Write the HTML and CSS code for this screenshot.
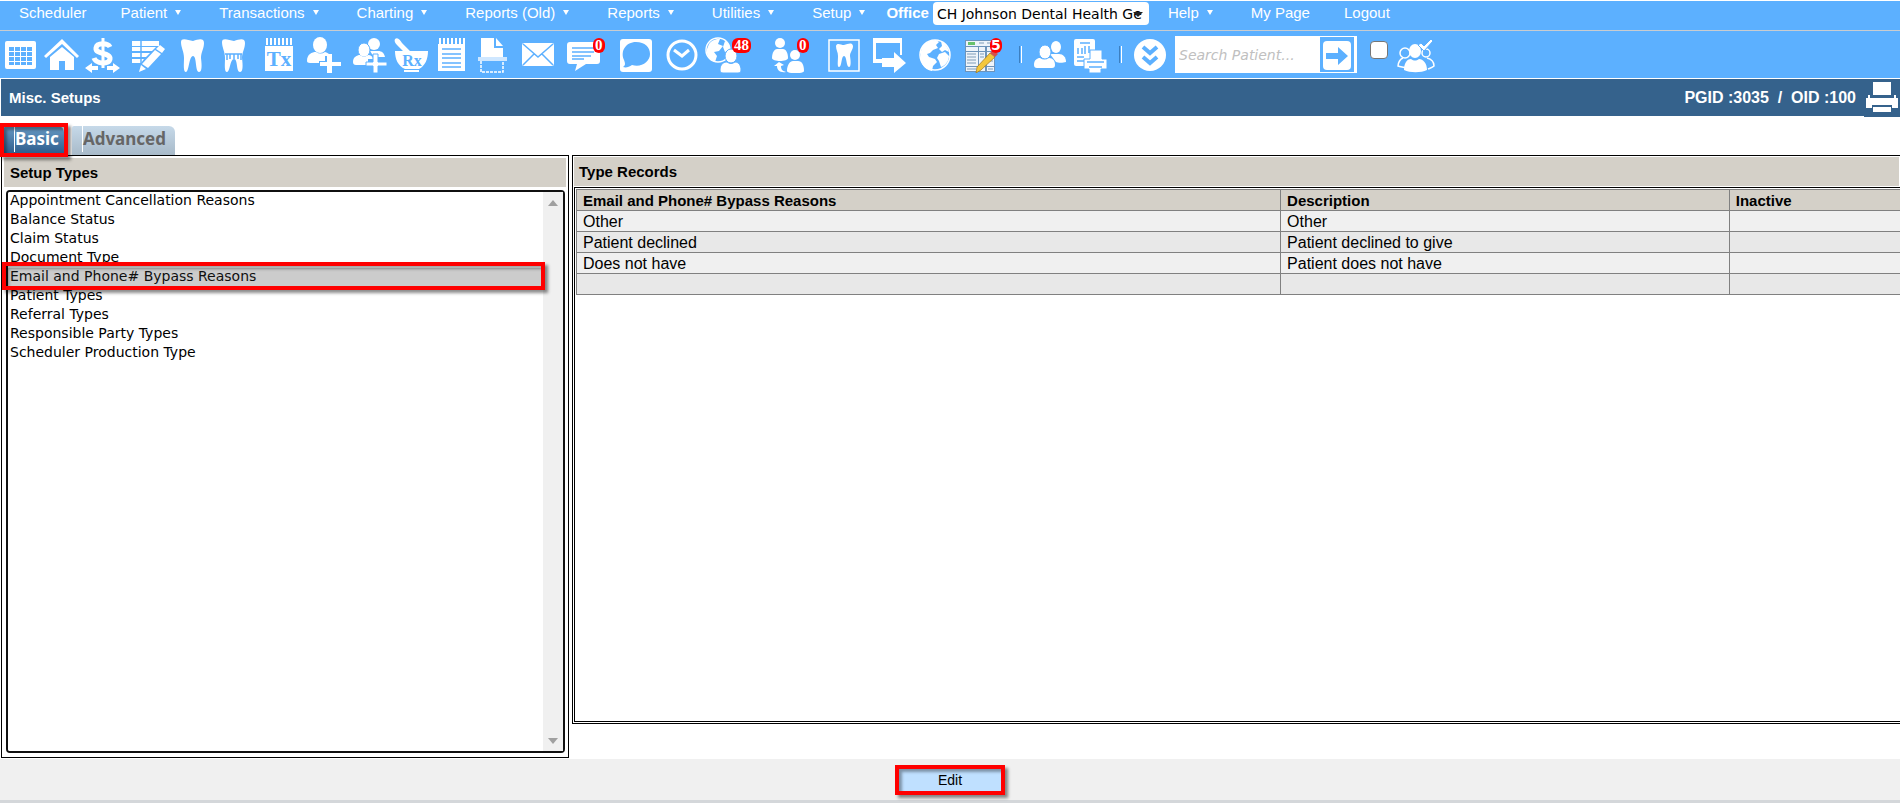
FILE: index.html
```html
<!DOCTYPE html>
<html lang="en">
<head>
<meta charset="utf-8">
<title>Misc. Setups</title>
<link rel="stylesheet" href="styles.css">
</head>
<body>
<nav class="menu" aria-label="Main">
  <a class="menu-item" href="#">Scheduler</a>
  <a class="menu-item has-sub" href="#">Patient</a>
  <a class="menu-item has-sub" href="#">Transactions</a>
  <a class="menu-item has-sub" href="#">Charting</a>
  <a class="menu-item has-sub" href="#">Reports (Old)</a>
  <a class="menu-item has-sub" href="#">Reports</a>
  <a class="menu-item has-sub" href="#">Utilities</a>
  <a class="menu-item has-sub" href="#">Setup</a>
  <label class="office-label" for="office">Office</label>
  <span class="office">
    <select id="office" class="office-select"><option>CH Johnson Dental Health Ge</option></select>
  </span>
  <a class="menu-item has-sub" href="#">Help</a>
  <a class="menu-item" href="#">My Page</a>
  <a class="menu-item" href="#">Logout</a>
</nav>

<div class="toolbar" role="toolbar" aria-label="Tools">
  <button class="tool tight" aria-label="Calendar"><svg viewBox="0 0 36 36"><rect x="2" y="4" width="31" height="28" rx="2"/><path class="cut" d="M6 10h5v4H6zM12 10h5v4h-5zM18 10h5v4h-5zM24 10h5v4h-5zM6 15h5v4H6zM12 15h5v4h-5zM18 15h5v4h-5zM24 15h5v4h-5zM6 20h5v4H6zM12 20h5v4h-5zM18 20h5v4h-5zM24 20h5v4h-5zM6 25h5v3H6zM12 25h5v3h-5zM18 25h5v3h-5zM24 25h5v3h-5z"/></svg></button>
  <button class="tool tight" aria-label="Home"><svg viewBox="0 0 36 36"><path d="M18 2 0 19l2 2L18 7l15 14 2-2zM6 20 18 10l12 10v13h-9v-9h-6v9H6z"/></svg></button>
  <button class="tool" aria-label="Transactions"><svg viewBox="0 0 36 36"><path class="line w5" d="M25 10c-2-4-13-5-14 1-1 7 15 4 14 11-1 6-14 5-16-1"/><path class="line w3" d="M18 1v30"/><path d="m0 31 7-5v3h6v4H7v3zM35 31l-7-5v3h-6v4h6v3z"/></svg></button>
  <button class="tool" aria-label="Edit ledger"><svg viewBox="0 0 36 36"><path d="M2 4h27v5H2zM2 10h24l-4 4H2zM2 16h18l-4 4H2zM2 22h12l-3 4H2zM30 8l5 4-3 4-6-4zM25 13l6 4-13 14-6-4zM11 28l5 4-7 3z"/><path class="cutline" d="M11 4v22"/></svg></button>
  <button class="tool tight" aria-label="Tooth chart"><svg viewBox="0 0 36 36"><path d="M6 5C6 0 13 3 18 4c6-2 11-3 11 2 0 6-3 9-3 15 1 8 1 14-2 14-4 0-2-16-6-16s-4 16-7 16c-3 0-2-8-2-14C9 14 6 11 6 5z"/></svg></button>
  <button class="tool" aria-label="Perio chart"><svg viewBox="0 0 36 36"><path d="M6 5C6 0 13 3 18 4c6-2 11-3 11 2 0 6-3 9-3 15 1 8 1 14-2 14-4 0-2-13-6-13s-4 13-7 13c-3 0-2-8-2-14C9 14 6 11 6 5z"/><path class="cutline" d="M9 17h17M11 17v6M14 17v5M18 17v5M22 17v5M25 17v6"/></svg></button>
  <button class="tool" aria-label="Treatment plan"><svg viewBox="0 0 36 36"><path d="M4 9h28v25H4z"/><path class="line w2" d="M6 1v7M10 1v7M14 1v7M18 1v7M22 1v7M26 1v7M30 1v7"/><text class="ink" x="18" y="29" font-size="21">Tx</text></svg></button>
  <button class="tool loose" aria-label="Add patient"><svg viewBox="0 0 36 36"><ellipse cx="14" cy="8" rx="7" ry="8"/><path d="M1 24c0-7 5-9 9-9 3 2 6 2 9 0 3 1 5 2 5 4h-5v5h-6v2H4c-2 0-3-1-3-2z"/><path d="M21 17h5v8h9v4h-9v7h-5v-7h-7v-4h7z"/></svg></button>
  <button class="tool tight" aria-label="Add family"><svg viewBox="0 0 36 36"><ellipse cx="22" cy="7" rx="6" ry="6"/><path d="M18 14h8c4 0 6 2 7 6H22z"/><ellipse class="cutfill" cx="12" cy="13" rx="6" ry="7"/><path d="M1 25c0-5 4-7 7-7 3 2 5 2 8 0 3 0 5 2 5 4h-5v6H4c-2 0-3-1-3-3z"/><path class="cutfill" d="M21 17h5v8h9v4h-9v7h-5v-7h-7v-4h7z"/></svg></button>
  <button class="tool tight" aria-label="Prescriptions"><svg viewBox="0 0 36 36"><path d="M2 2c3-2 5 1 7 4l9 9h-7L4 8C2 6 1 4 2 2zM2 14h33c0 8-3 15-9 18H12C5 29 2 22 2 14zM11 33h15v2H11z"/><text class="ink" x="19" y="29" font-size="16">Rx</text></svg></button>
  <button class="tool tight" aria-label="Notes"><svg viewBox="0 0 36 36"><path d="M4 7h27v27H4z"/><path class="line w2" d="M6 1v6M10 1v6M14 1v6M18 1v6M22 1v6M26 1v6M30 1v6"/><path class="cutline" d="M8 12h19M8 17h19M8 21h19M8 26h19M8 30h19"/></svg></button>
  <button class="tool" aria-label="Scan"><svg viewBox="0 0 36 36"><path d="M6 1h13v10h9v9H6z"/><path d="m21 1 7 8h-7z"/><path class="soft" d="M3 20h29v4H3z"/><path class="line" stroke-dasharray="3 1" d="M6 24v11h22V24"/></svg></button>
  <button class="tool loose" aria-label="Mail"><svg viewBox="0 0 36 36"><rect x="2" y="6" width="32" height="23" rx="2"/><path class="cutline" d="m3 7 15 13L33 7M3 28l11-11M33 28 22 17"/></svg></button>
  <button class="tool wide" aria-label="Messages, 0"><svg viewBox="0 0 36 36"><path d="M4 5h27c2 0 3 1 3 3v16c0 2-1 3-3 3H20L9 34l2-7H4c-2 0-3-1-3-3V8c0-2 1-3 3-3z"/><path class="cutline" d="M6 11h22M6 15h22M6 19h19M6 22h12"/></svg><span class="badge">0</span></button>
  <button class="tool loose" aria-label="Chat"><svg viewBox="0 0 36 36"><rect x="2" y="2" width="32" height="33" rx="3"/><path class="cut" d="M18 5c9 0 14 5 14 12 0 8-9 14-18 11-3 2-6 3-9 2 3-2 2-4 1-7C2 14 8 5 18 5z"/></svg></button>
  <button class="tool tight" aria-label="Time clock"><svg viewBox="0 0 36 36"><circle class="line w3" cx="18" cy="18" r="14"/><path class="line w3" d="m10 13 8 6 7-6"/></svg></button>
  <button class="tool badged" aria-label="Online requests, 48"><svg viewBox="0 0 36 36"><circle class="line" cx="13" cy="13" r="12"/><path d="M4 7c4-5 8-5 11-5l-2 5 5 2-4 5-5 1 3 4-2 6C5 23 1 19 2 12zM20 4c4 2 5 6 5 9l-5 2-2-5z"/><ellipse class="cutfill" cx="26" cy="19" rx="6" ry="7"/><path class="cutfill" d="M15 33c0-6 4-8 7-8 3 2 5 2 8 0 4 0 6 4 6 8 0 2-1 3-3 3H18c-2 0-3-1-3-3z"/></svg><span class="badge">48</span></button>
  <button class="tool wider" aria-label="Referrals, 0"><svg viewBox="0 0 36 36"><circle cx="10" cy="6" r="5"/><path d="M2 21c0-6 3-9 5-9h6c3 0 5 4 5 9 0 4-16 4-16 0z"/><circle cx="25" cy="18" r="5"/><path d="M17 34c0-6 3-10 6-10h5c4 0 6 4 6 10 0 3-17 3-17 0zM9 25l5 3-3 1c0 4 2 5 5 6-6 1-9-2-9-6H4z"/></svg><span class="badge">0</span></button>
  <button class="tool loose" aria-label="Tooth imaging"><svg viewBox="0 0 36 36"><rect class="line" x="3" y="3" width="30" height="31"/><path d="M10 9c1-4 5-1 8-1 4-1 8-3 9 1 0 4-3 6-3 10 1 6 1 11-1 11-3 0-2-11-5-11s-2 11-5 11c-2 0-1-6-1-11 0-4-2-6-2-10z"/></svg></button>
  <button class="tool" aria-label="Send window"><svg viewBox="0 0 36 36"><path fill-rule="evenodd" d="M1 1h29v17h-2V6H4v16h6v4H1z"/><path d="M10 21h12v-6l12 11-12 10v-6H10z"/></svg></button>
  <button class="tool loose" aria-label="Web"><svg viewBox="0 0 36 36"><circle class="line" cx="18" cy="18" r="15"/><path d="M4 14C6 6 13 3 19 3l3 2-3 3 2 3-5 2-3 3-3 1 2 3 6 2 2 3-4 4-1 5C7 33 2 25 4 16zM24 4c5 3 7 7 8 11l-4-2-3 2-3-3 3-3zM22 17l6-2 4 4c0 5-4 10-8 11l-2-6-2-3z"/></svg></button>
  <button class="tool wider" aria-label="Worklist, 5"><svg viewBox="0 0 36 36"><path fill="#6d94bb" d="M2 3h30v32H2z"/><path fill="#eef4fa" d="M3 4h28v5H3zM3 10h12v4H3zM16 10h6v4h-6zM24 10h7v4h-7zM3 15h12v14H3zM16 15h6v14h-6zM24 15h7v14h-7zM3 30h12v4H3zM16 30h6v4h-6zM24 30h7v4h-7z"/><path fill="#69c26c" d="M5 5h7v3H5z"/><path fill="none" stroke="#7f9cb8" d="M16 6h5M24 6h4M4 17h9M4 20h9M4 23h9M4 26h9M17 17h4M17 20h4M25 20h5M25 24h5M4 32h9M25 32h5"/><path fill="#f4c73c" stroke="#9b7420" stroke-width=".7" d="m27 16 5 4-14 13-5 3 1-6z"/><path fill="#d2514c" d="m27 16 3-3 5 4-3 3z"/></svg><span class="badge sans">5</span></button>
  <span class="sep"></span>
  <button class="tool tight" aria-label="Patients"><svg viewBox="0 0 36 36"><ellipse cx="24" cy="10" rx="5" ry="6"/><path d="M18 17h9c4 0 7 3 7 8-3 1-8 1-10 0z"/><ellipse class="cutfill" cx="13" cy="15" rx="6" ry="7"/><path d="M2 28c0-5 3-7 6-7 3 2 6 2 9 0 4 0 6 3 6 7 0 2-1 3-3 3H5c-2 0-3-1-3-3z"/></svg></button>
  <button class="tool loose" aria-label="Print report"><svg viewBox="0 0 36 36"><rect x="1" y="2" width="21" height="27" rx="2"/><path class="cutline" d="M7 6h10M5 11v6M9 11v6M12 9v8M16 9v7M4 20h7M4 24h7"/><path class="cutfill" d="M17 13h12v9h5v10h-6v4H16v-4h-5V22h6z"/><path class="cutline" d="M14 25h17M16 30h13"/></svg></button>
  <span class="sep"></span>
  <button class="tool tight" aria-label="More"><svg viewBox="0 0 36 36"><circle cx="18" cy="18" r="16"/><path class="cutline w4" d="m11 10 7 6 7-6M11 20l7 6 7-6"/></svg></button>
  <form class="search">
    <input class="search-input" type="text" aria-label="Search patient" placeholder="Search Patient...">
    <button class="search-go" type="button" aria-label="Go"><svg viewBox="0 0 34 34"><rect x="3" y="3" width="28" height="29" rx="4"/><path class="cut" d="M6 15h12V9l10 9-10 9v-6H6z"/></svg></button>
  </form>
  <input class="check" type="checkbox" aria-label="Search all offices">
  <button class="tool group" aria-label="Group check"><svg viewBox="0 0 40 36"><circle class="line" cx="8" cy="16" r="5"/><path class="line" d="M6 21c-3 1-5 5-5 8 3 1 6 1 8 2M30 21c4 1 7 4 7 8-2 2-4 2-6 3"/><circle class="line" cx="29" cy="16" r="4"/><ellipse cx="18" cy="14" rx="6" ry="7"/><path d="M7 33c0-8 4-11 7-11 3 2 5 2 8 0 4 0 8 4 8 11-6 3-17 3-23 0z"/><path class="cutfill" d="m24 6 3 3 7-7 2 2-9 10-6-6z"/></svg></button>
</div>

<header class="title-bar">
  <h1 class="title">Misc. Setups</h1>
  <span class="ids">PGID :3035&nbsp; /&nbsp; OID :100</span>
  <button class="print" aria-label="Print"><svg viewBox="0 0 36 36"><path d="M9 2h18v13H9z"/><path d="M2 18h2V15h2v3h24v-3h2v3h2v10h-6v-3H8v3H2z"/><path d="M9 27h18v5H9z"/></svg></button>
</header>

<div class="tabs" role="tablist">
  <button class="tab active" role="tab" aria-selected="true"><span>Basic</span></button>
  <button class="tab" role="tab" aria-selected="false"><span>Advanced</span></button>
</div>

<main class="panels">
  <section class="panel types">
    <h2 class="panel-head"><label for="types">Setup Types</label></h2>
    <div class="list">
      <select id="types" class="list-select" size="9">
        <option>Appointment Cancellation Reasons</option>
        <option>Balance Status</option>
        <option>Claim Status</option>
        <option>Document Type</option>
        <option selected>Email and Phone# Bypass Reasons</option>
        <option>Patient Types</option>
        <option>Referral Types</option>
        <option>Responsible Party Types</option>
        <option>Scheduler Production Type</option>
      </select>
      <div class="rail" aria-hidden="true"><svg viewBox="0 0 10 6"><path d="M5 0 10 6H0z"/></svg><svg viewBox="0 0 10 6"><path d="M0 0h10L5 6z"/></svg></div>
      <div class="mark row-mark"></div>
    </div>
  </section>
  <section class="panel records">
    <h2 class="panel-head">Type Records</h2>
    <div class="table-box">
      <table class="table">
        <colgroup><col class="col-name"><col class="col-desc"><col></colgroup>
        <thead><tr><th>Email and Phone# Bypass Reasons</th><th>Description</th><th>Inactive</th></tr></thead>
        <tbody>
          <tr><td>Other</td><td>Other</td><td></td></tr>
          <tr><td>Patient declined</td><td>Patient declined to give</td><td></td></tr>
          <tr><td>Does not have</td><td>Patient does not have</td><td></td></tr>
          <tr><td></td><td></td><td></td></tr>
        </tbody>
      </table>
    </div>
  </section>
</main>

<footer class="actions"><button class="edit">Edit</button></footer>
</body>
</html>
```

FILE: styles.css
```css
* { box-sizing: border-box; }

body {
  margin: 0;
  padding-top: 1px;
  min-height: 100vh;
  display: flex;
  flex-direction: column;
  background: #fff;
  color: #000;
  font-family: "Liberation Sans", Arial, sans-serif;
  font-size: 15px;
  overflow-x: hidden;
}

button { padding: 0; border: 0; background: none; font: inherit; cursor: pointer; }
h1, h2 { margin: 0; font-size: 15px; font-weight: bold; }

/* menu */
.menu {
  display: flex;
  align-items: center;
  height: 30px;
  padding: 0 2px 4px;
  background: #5cb0ff;
  border-bottom: 1px solid #c9ccd0;
  color: #fff;
  white-space: nowrap;
}
.menu-item { display: flex; align-items: center; padding: 0 17px 2px; color: #fff; text-decoration: none; }
.menu-item.has-sub::after {
  content: "";
  margin: 0 4px 0 8px;
  border: 3px solid transparent;
  border-top: 5px solid #fff;
  border-bottom: 0;
}
.office-label { margin-right: 4px; padding-bottom: 3px; font-weight: bold; }
.office { position: relative; margin-right: 2px; }
.office-select {
  display: block;
  width: 216px;
  height: 23px;
  padding: 0 4px;
  border: 0;
  border-radius: 4px;
  background: #fff;
  appearance: none;
  font: 14px "DejaVu Sans", Verdana, sans-serif;
  color: #000;
}
.office::after {
  content: "";
  position: absolute;
  right: 6px;
  top: 10px;
  border: 5px solid transparent;
  border-top-color: #222;
  border-bottom: 0;
}

/* toolbar */
.toolbar {
  display: flex;
  align-items: center;
  height: 47px;
  padding-left: 3px;
  background: #5cb0ff;
}
.tool { position: relative; flex: none; width: 45px; height: 36px; text-align: left; }
.tool.tight { width: 41px; }
.tool.loose { width: 46px; }
.tool.wide { width: 52px; }
.tool.wider { width: 56px; }
.tool.badged { width: 65px; }
.tool svg { display: block; width: 36px; height: 36px; fill: #fff; }
.tool.group svg { width: 40px; }
.tool .line { fill: none; stroke: #fff; stroke-width: 1.5; }
.tool .w2 { stroke-width: 2; }
.tool .w3 { stroke-width: 3; }
.tool .w5 { stroke-width: 5; }
.tool .soft { fill: #cfe7ff; }
.cut { fill: #5cb0ff; }
.cutline { fill: none; stroke: #5cb0ff; stroke-width: 1.5; }
.cutline.w4 { stroke-width: 4; }
.cutfill { stroke: #5cb0ff; stroke-width: 1; }
.ink { fill: #5cb0ff; font-family: "Liberation Serif", serif; font-weight: bold; text-anchor: middle; }
.badge {
  position: absolute;
  left: 27px;
  top: 1px;
  padding: 0 2px;
  border-radius: 6px;
  background: #f00;
  color: #fff;
  font: bold 15px/15px "Liberation Serif", serif;
}
.badge.sans { padding: 0 1px; font: bold 14px/15px "DejaVu Sans", sans-serif; }
.sep { flex: none; width: 3px; height: 17px; margin-right: 10px; border-left: 1px solid #3c7fc0; border-right: 1px solid #fff; }

.search { display: flex; width: 182px; height: 37px; padding: 1px 3px 1px 0; margin: 0 13px 0 2px; background: #fff; }
.search-input {
  flex: 1;
  min-width: 0;
  padding: 0 4px;
  border: 0;
  outline: 0;
  background: none;
  font: italic 14px "DejaVu Sans", Verdana, sans-serif;
}
.search-input::placeholder { color: #c0c0c0; opacity: 1; }
.search-go { width: 34px; background: #5cb0ff; }
.search-go svg { display: block; fill: #fff; }
.check {
  width: 18px;
  height: 18px;
  margin: 0 9px 10px 0;
  border: 1px solid #767676;
  border-radius: 4px;
  background: #fff;
  appearance: none;
}

/* title bar */
.title-bar {
  display: flex;
  align-items: center;
  height: 37px;
  margin: 1px 0 0 1px;
  padding-left: 8px;
  background: #35628c;
  color: #fff;
}
.title { flex: 1; }
.ids { margin-right: 8px; font-size: 16px; font-weight: bold; }
.print { width: 36px; height: 38px; background: #35628c; }
.print svg { display: block; width: 36px; fill: #fff; }

/* tabs */
.tabs { display: flex; align-items: flex-end; gap: 8px; height: 39px; padding-left: 4px; }
.tab {
  position: relative;
  height: 29px;
  padding: 0 9px 3px 0;
  border-radius: 2px 6px 0 0;
  background: linear-gradient(#c6d9e9, #a8bac9);
  color: #666;
  font: bold 17px "Noto Sans", sans-serif;
}
.tab span { display: block; margin-left: 10px; border-left: 1px solid #fff; line-height: 26px; }
.tab.active { padding-right: 5px; color: #fff; background: linear-gradient(#6a9cc6, #2a5a8a); }
.tab.active::after { content: ""; position: absolute; inset: -3px -4px -2px; }

/* red highlight frame */
.mark, .tab.active::after, .edit {
  border: 4px solid #f00;
  box-shadow: 3px 3px 3px rgba(0, 0, 0, .45), inset 3px 3px 3px rgba(0, 0, 0, .35);
}

/* panels */
.panels { flex: 1; display: grid; grid-template-columns: 30% 1fr; padding-bottom: 1px; }
.panel { border: 1px solid #000; }
.panel-head { display: flex; align-items: center; height: 29px; background: #d4d0c8; }
.types { display: flex; flex-direction: column; margin: 0 1px 0 1px; padding: 2px; }
.types .panel-head { padding-left: 6px; }
.list {
  position: relative;
  flex: 1;
  display: flex;
  margin: 3px 1px 2px 2px;
  border: 2px solid #101010;
  border-radius: 4px;
}
.list-select {
  flex: 1;
  min-width: 0;
  padding: 0;
  border: 0;
  outline: 0;
  overflow: hidden;
  background: #fff;
  font: 14px "DejaVu Sans", Verdana, sans-serif;
  color: #000;
}
.list-select option { min-height: 19px; padding: 0 2px; line-height: 19px; }
.list-select option:checked { background: #ccc linear-gradient(#ccc, #ccc); }
.rail {
  width: 20px;
  padding: 8px 5px 7px;
  display: flex;
  flex-direction: column;
  justify-content: space-between;
  background: #f0f0f0;
}
.rail svg { width: 10px; fill: #a0a0a0; }
.row-mark { position: absolute; left: -6px; right: 18px; top: 70px; height: 28px; pointer-events: none; }

.records { margin: 0 0 34px 2px; padding: 1px 0 1px 1px; border-right: 0; display: flex; flex-direction: column; }
.records .panel-head { padding-left: 5px; margin: 0 1px 1px 0; }
.table-box { flex: 1; padding: 1px 0 0 1px; border: 1px solid #000; border-right: 0; }
.table { width: 100%; table-layout: fixed; border-collapse: collapse; }
.table th, .table td {
  height: 21px;
  padding: 2px 6px 0;
  border: 1px solid #808080;
  border-right: 0;
  line-height: 18px;
  text-align: left;
}
.table th { background: #d4d0c8; }
.table td { font-size: 16px; background: #f0f0f0; }
.table tr:nth-child(even) td { background: #e8e8e8; }
.col-name { width: 53.2%; }
.col-desc { width: 33.9%; }

/* footer */
.actions {
  display: flex;
  justify-content: center;
  align-items: center;
  height: 44px;
  background: #f0f0f0;
  border-bottom: 3px solid #d4d7da;
}
.edit { width: 110px; height: 30px; background: #bfe0ff; color: #000; font-size: 14px; }
```
